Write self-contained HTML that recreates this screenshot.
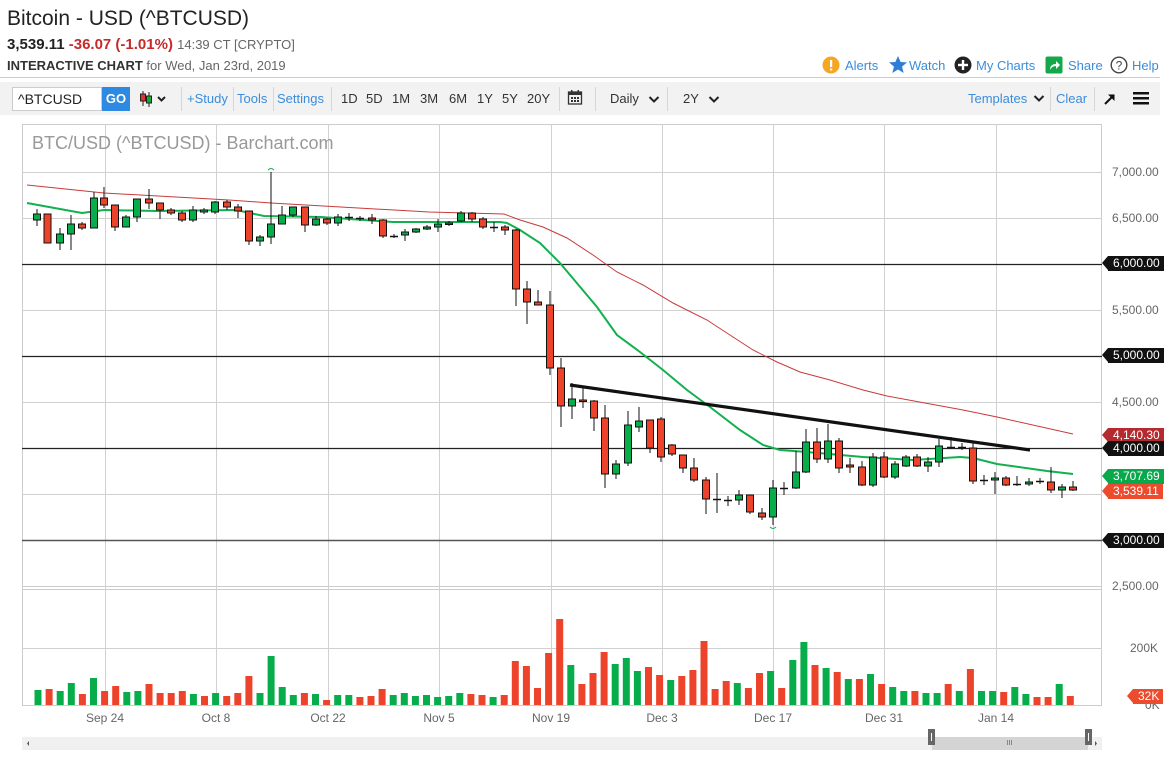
<!DOCTYPE html>
<html><head><meta charset="utf-8">
<style>
*{margin:0;padding:0;box-sizing:border-box}
body{width:1173px;height:759px;background:#fff;font-family:"Liberation Sans",sans-serif;position:relative;overflow:hidden;color:#222}
.a{position:absolute;white-space:nowrap}
.lnk{color:#3a8ddb;font-size:13px}
.tb{color:#333;font-size:13px}
.tbl{color:#3a8ddb;font-size:13px}
.sep{position:absolute;top:87px;width:1px;height:24px;background:#d6d6d6}
.ax{position:absolute;font-size:12px;color:#666;left:1112px}
.tag{position:absolute;left:1108px;height:15px;font-size:12px;color:#fff;padding:0 4px 0 5px;line-height:15px}
.tag:before{content:"";position:absolute;left:-6px;top:0;border-top:7.5px solid transparent;border-bottom:7.5px solid transparent;border-right:6px solid;border-right-color:inherit}
.dt{position:absolute;top:711px;font-size:12px;color:#666;transform:translateX(-50%)}
</style></head><body>
<div class="a" style="left:7px;top:7px;font-size:21px;color:#222">Bitcoin - USD (^BTCUSD)</div>
<div class="a" style="left:7px;top:36px;font-size:15px"><b>3,539.11</b> <b style="color:#c62a2a">-36.07 (-1.01%)</b> <span style="font-size:13px;color:#666">14:39 CT [CRYPTO]</span></div>
<div class="a" style="left:7px;top:58px;font-size:13px"><b style="color:#333">INTERACTIVE CHART</b> <span style="color:#666">for Wed, Jan 23rd, 2019</span></div>
<div class="a" style="left:0;top:77px;width:1160px;height:1px;background:#ccc"></div>

<svg class="a" style="left:822px;top:56px" width="18" height="18"><circle cx="9" cy="9" r="8.5" fill="#f5a623"/><rect x="8" y="4" width="2.2" height="7" fill="#fff"/><rect x="8" y="12.5" width="2.2" height="2" fill="#fff"/></svg>
<div class="a lnk" style="left:845px;top:58px">Alerts</div>
<svg class="a" style="left:888px;top:55px" width="20" height="19"><polygon points="10,1 12.6,7 19,7.4 14,11.6 15.7,18 10,14.5 4.3,18 6,11.6 1,7.4 7.4,7" fill="#2d7fd6"/></svg>
<div class="a lnk" style="left:909px;top:58px">Watch</div>
<svg class="a" style="left:954px;top:56px" width="18" height="18"><circle cx="9" cy="9" r="8.5" fill="#222"/><rect x="4" y="7.8" width="10" height="2.4" fill="#fff"/><rect x="7.8" y="4" width="2.4" height="10" fill="#fff"/></svg>
<div class="a lnk" style="left:976px;top:58px">My Charts</div>
<svg class="a" style="left:1045px;top:56px" width="18" height="18"><rect x="0.5" y="0.5" width="17" height="17" rx="2" fill="#15a84a"/><path d="M5 14 Q5 8 11 8 L11 5 L15 9 L11 13 L11 10 Q7 10 5 14Z" fill="#fff"/></svg>
<div class="a lnk" style="left:1068px;top:58px">Share</div>
<svg class="a" style="left:1110px;top:56px" width="18" height="18"><circle cx="9" cy="9" r="7.8" fill="none" stroke="#444" stroke-width="1.4"/><text x="9" y="13.5" font-size="12" text-anchor="middle" fill="#444" font-family="Liberation Sans">?</text></svg>
<div class="a lnk" style="left:1132px;top:58px">Help</div>

<div class="a" style="left:0;top:82px;width:1160px;height:33px;background:#f2f2f2"></div>
<div class="a" style="left:12px;top:87px;width:90px;height:24px;background:#fff;border:1px solid #ccc;font-size:14px;padding:3px 0 0 5px;color:#222">^BTCUSD</div>
<div class="a" style="left:102px;top:87px;width:28px;height:24px;background:#2d8ae0;color:#fff;font-size:13px;font-weight:bold;text-align:center;line-height:24px">GO</div>
<svg class="a" style="left:139px;top:89px" width="32" height="20"><line x1="4" y1="2" x2="4" y2="17" stroke="#222"/><rect x="1.5" y="5" width="5" height="7" fill="#d33" stroke="#222"/><line x1="10" y1="3" x2="10" y2="18" stroke="#222"/><rect x="7.5" y="7" width="5" height="7" fill="#1a3" stroke="#222"/><path d="M19 8 L22.5 11.5 L26 8" fill="none" stroke="#222" stroke-width="2"/></svg>
<div class="sep" style="left:181px"></div>
<div class="a tbl" style="left:187px;top:91px">+Study</div>
<div class="sep" style="left:233px"></div>
<div class="a tbl" style="left:237px;top:91px">Tools</div>
<div class="sep" style="left:273px"></div>
<div class="a tbl" style="left:277px;top:91px">Settings</div>
<div class="sep" style="left:331px"></div>
<div class="a tb" style="left:341px;top:91px">1D</div>
<div class="a tb" style="left:366px;top:91px">5D</div>
<div class="a tb" style="left:392px;top:91px">1M</div>
<div class="a tb" style="left:420px;top:91px">3M</div>
<div class="a tb" style="left:449px;top:91px">6M</div>
<div class="a tb" style="left:477px;top:91px">1Y</div>
<div class="a tb" style="left:502px;top:91px">5Y</div>
<div class="a tb" style="left:527px;top:91px">20Y</div>
<div class="sep" style="left:559px"></div>
<svg class="a" style="left:567px;top:89px" width="16" height="16"><rect x="1.5" y="3" width="13" height="12" fill="none" stroke="#333" stroke-width="1.3"/><rect x="1.5" y="3" width="13" height="3" fill="#333"/><path d="M4 8h2v2H4zM7 8h2v2H7zM10 8h2v2h-2zM4 11h2v2H4zM7 11h2v2H7zM10 11h2v2h-2z" fill="#333"/><rect x="4" y="1" width="1.5" height="3" fill="#333"/><rect x="10.5" y="1" width="1.5" height="3" fill="#333"/></svg>
<div class="sep" style="left:595px"></div>
<div class="a tb" style="left:610px;top:91px">Daily</div>
<svg class="a" style="left:648px;top:95px" width="12" height="9"><path d="M1.5 2 L6 6.5 L10.5 2" fill="none" stroke="#222" stroke-width="2"/></svg>
<div class="sep" style="left:667px"></div>
<div class="a tb" style="left:683px;top:91px">2Y</div>
<svg class="a" style="left:708px;top:95px" width="12" height="9"><path d="M1.5 2 L6 6.5 L10.5 2" fill="none" stroke="#222" stroke-width="2"/></svg>
<div class="a tbl" style="left:968px;top:91px">Templates</div>
<svg class="a" style="left:1033px;top:94px" width="12" height="9"><path d="M1.5 2 L6 6.5 L10.5 2" fill="none" stroke="#222" stroke-width="2"/></svg>
<div class="sep" style="left:1050px"></div>
<div class="a tbl" style="left:1056px;top:91px">Clear</div>
<div class="sep" style="left:1094px"></div>
<svg class="a" style="left:1103px;top:92px" width="14" height="14"><path d="M2 12 L11 3" stroke="#111" stroke-width="2"/><path d="M5 2.5 H11.5 V9 Z" fill="#111"/></svg>
<svg class="a" style="left:1133px;top:91px" width="16" height="14"><rect y="1" width="16" height="2.5" fill="#111"/><rect y="6" width="16" height="2.5" fill="#111"/><rect y="11" width="16" height="2.5" fill="#111"/></svg>

<svg id="ch" class="a" style="left:0;top:0" width="1173" height="759"></svg>

<div class="a" style="left:32px;top:133px;font-size:18px;color:#999">BTC/USD (^BTCUSD) - Barchart.com</div>
<div class="ax" style="top:165px">7,000.00</div>
<div class="ax" style="top:211px">6,500.00</div>
<div class="ax" style="top:303px">5,500.00</div>
<div class="ax" style="top:395px">4,500.00</div>
<div class="ax" style="top:579px">2,500.00</div>
<div class="ax" style="top:641px;left:1130px">200K</div>
<div class="ax" style="top:698px;left:1145px">0K</div>
<div class="tag" style="top:256px;background:#111;border-color:#111">6,000.00</div>
<div class="tag" style="top:348px;background:#111;border-color:#111">5,000.00</div>
<div class="tag" style="top:428px;background:#b42a2e;border-color:#b42a2e">4,140.30</div>
<div class="tag" style="top:441px;background:#111;border-color:#111">4,000.00</div>
<div class="tag" style="top:469px;background:#0aa84c;border-color:#0aa84c">3,707.69</div>
<div class="tag" style="top:484px;background:#ec4b2e;border-color:#ec4b2e">3,539.11</div>
<div class="tag" style="top:533px;background:#111;border-color:#111">3,000.00</div>
<div class="tag" style="top:689px;left:1133px;background:#ec4b2e;border-color:#ec4b2e">32K</div>
<div class="dt" style="left:105px">Sep 24</div>
<div class="dt" style="left:216px">Oct 8</div>
<div class="dt" style="left:328px">Oct 22</div>
<div class="dt" style="left:439px">Nov 5</div>
<div class="dt" style="left:551px">Nov 19</div>
<div class="dt" style="left:662px">Dec 3</div>
<div class="dt" style="left:773px">Dec 17</div>
<div class="dt" style="left:884px">Dec 31</div>
<div class="dt" style="left:996px">Jan 14</div>

<script>
var s=document.getElementById('ch'),h='';
function L(x1,y1,x2,y2,c,w){h+='<line x1="'+x1+'" y1="'+y1+'" x2="'+x2+'" y2="'+y2+'" stroke="'+c+'" stroke-width="'+(w||1)+'"/>';}
function R(x,y,w,hh,f,st){h+='<rect x="'+x+'" y="'+y+'" width="'+w+'" height="'+hh+'" fill="'+f+'"'+(st?' stroke="'+st+'"':'')+'/>';}
h+='<rect x="22.5" y="124.5" width="1079" height="581" fill="none" stroke="#ccc"/>';
L(22,586.5,1102,586.5,'#ccc');L(22,589.5,1102,589.5,'#ccc');
[172,218,310,402,494].forEach(function(y){L(22,y+.5,1102,y+.5,'#d0d0d0');});
L(22,648.5,1102,648.5,'#d0d0d0');
[105,216,328,439,551,662,773,884,996].forEach(function(x){L(x+.5,124,x+.5,706,'#d0d0d0');});
[264,356,448].forEach(function(y){L(22,y+.5,1102,y+.5,'#222',1.3);});
L(22,540.5,1102,540.5,'#555',1.5);
var vh=[15,16,14,22,11,27,14,19,13,14,21,12,12,14,11,9,12,9,12,29,12,49,18,10,12,11,5,10,10,8,9,16,10,12,9,10,8,9,12,11,10,8,10,44,39,17,52,86,40,21,32,
53,41,47,34,38,30,25,29,35,64,16,24,22,17,32,34,17,45,63,40,37,33,26,26,31,21,18,14,14,12,12,21,14,36,14,14,13,18,11,8,8,21,9];
var vc="GRGGRGRRGGRRRRGRGRRRGGGGRGRGGRRRGGGGGGGRRGRRRRRRGRR"+"RGGGRRGRRRRRGRRGRGGRGRGRGRGGRGGRGRGGRGGRRGR";
for(var i=0;i<vh.length;i++){var x=38+i*11.1;R((x-3.5).toFixed(1),705-vh[i],7,vh[i],vc[i]=='G'?'#08ad4b':'#ee432b');}
function P(pts,c,w){h+='<polyline points="'+pts+'" fill="none" stroke="'+c+'" stroke-width="'+w+'"/>';}
P("27,185 104,193 229,200 271,203 429,212 504,214 520,220 543,227 567,238 593,255 617,272 643,285 673,303 707,320 733,337 753,350 777,362 800,372 830,380 863,390 887,396 963,410 997,417 1073,434",'#c83a3a',1);
P("27,203 60,209 82,213 104,210 157,211 236,210 264,216 321,217 393,222 500,222 507,223 520,230 540,243 560,263 597,307 617,335 640,352 663,370 687,390 710,407 740,430 763,445 780,450 807,452 863,457 913,460 960,457 973,458 997,464 1047,471 1073,474",'#12b04f',2);
var c=[[37,'G',214,220,209,226],[47.5,'R',214,243,214,243],[60,'G',234,243,228,250],[71,'G',224,234,215,250],[82,'R',224,228,222,230],[94,'G',198,228,192,228],[104,'R',198,205,187,208],[115,'R',205,227,205,231],[126,'G',217,227,215,227],[137,'G',199,217,199,222],[149,'R',199,203,189,209],[160,'R',203,210,203,219],[171,'R',210,213,208,215],[182,'R',213,220,211,222],[193,'G',210,220,206,222],[204,'G',210,212,208,214],[215,'G',202,212,201,214],[227,'R',202,207,200,210],[238,'R',207,211,204,218],[249,'R',211,241,211,245],[260,'G',237,241,235,246],[271,'G',224,237,172,244],[282,'G',215,224,206,224],[293,'G',207,215,207,217],[305,'R',207,225,207,232],[316,'G',219,225,216,226],[327,'R',219,223,218,225],[338,'G',217,223,214,226],[349,'D',217,217,213,221],[360,'D',218,218,216,221],[372,'R',218,220,214,224],[383,'R',220,236,219,238],[394,'D',236,236,234,238],[405,'G',232,235,229,241],[416,'G',229,232,228,233],[427,'G',227,229,225,230],[438,'G',224,227,219,232],[449,'G',223,224,221,226],[461,'G',213,221,211,222],[472,'R',213,219,212,222],[483,'R',219,227,217,229],[494,'D',227,227,222,232],[505,'R',227,230,225,235],
[516,'R',230,289,229,306],[527,'R',289,302,281,324],[538,'R',302,305,290,305],[550,'R',305,368,291,375],[561,'R',368,406,358,427],[572,'G',399,406,383,419],[583,'R',400,401,388,408],[594,'R',401,418,400,431],[605,'R',418,474,405,488],[616,'G',464,474,460,479],[628,'G',425,463,411,466],[639,'G',421,427,407,432],[650,'R',420,448,420,453],[661,'R',419,457,417,462],[672,'R',445,454,444,456],[683,'R',455,468,455,473],[694,'R',468,480,458,482],[706,'R',480,499,477,514],[717,'D',499,499,473,513],[728,'D',500,500,496,506],[739,'G',495,500,490,505],[750,'R',495,512,495,514],[762,'R',513,517,508,520],[773,'G',488,517,480,525],[784,'D',488,488,482,495],
[796,'G',472,488,451,489],[806,'G',442,472,429,473],[817,'R',442,459,428,463],[828,'G',441,459,424,463],[839,'R',441,468,438,473],[850,'R',465,467,458,473],[862,'R',467,485,461,486],[873,'G',457,485,453,487],[884,'R',457,477,452,478],[895,'G',464,477,461,479],[906,'G',457,466,455,467],[917,'R',457,466,454,467],[928,'G',462,466,457,472],[939,'G',446,462,439,467],[951,'D',447,447,437,449],[962,'D',447,447,443,450],[973,'R',448,481,443,484],[984,'D',480,480,475,485],[995,'G',478,480,472,494],[1006,'R',478,485,476,486],[1017,'D',484,485,476,486],[1029,'G',482,484,478,486],[1040,'D',481,481,478,484],[1051,'R',482,490,467,493],[1062,'G',487,490,484,498],[1073,'R',487,490,481,491]];
c.forEach(function(k){var x=k[0];L(x,k[4],x,k[5],'#111');
 if(k[1]=='D'){L(x-4,k[2]+.5,x+4,k[2]+.5,'#111',1.5);}
 else{R(x-3.5,k[2],7,Math.max(k[3]-k[2],1.5),k[1]=='G'?'#08ad4b':'#ee432b','#111');}});
h+='<path d="M268 170 Q271 167 274 170" fill="none" stroke="#12b04f"/><path d="M770 527 Q773 530 776 527" fill="none" stroke="#12b04f"/>';
L(570,385,1030,450,'#111',3.2);
R(22,737,1080,13,'#f0f0f0');R(932,737,156,13,'#d4d4d4');
R(928,729,7,16,'#666');R(1085,729,7,16,'#666');
L(931.5,733,931.5,741,'#fff');L(1088.5,733,1088.5,741,'#fff');
L(1007.5,740,1007.5,745,'#888');L(1009.5,740,1009.5,745,'#888');L(1011.5,740,1011.5,745,'#888');
h+='<path d="M29 741 L27 743.5 L29 746Z" fill="#555"/><path d="M1095 741 L1097 743.5 L1095 746Z" fill="#555"/>';
s.innerHTML=h;
</script>
</body></html>
